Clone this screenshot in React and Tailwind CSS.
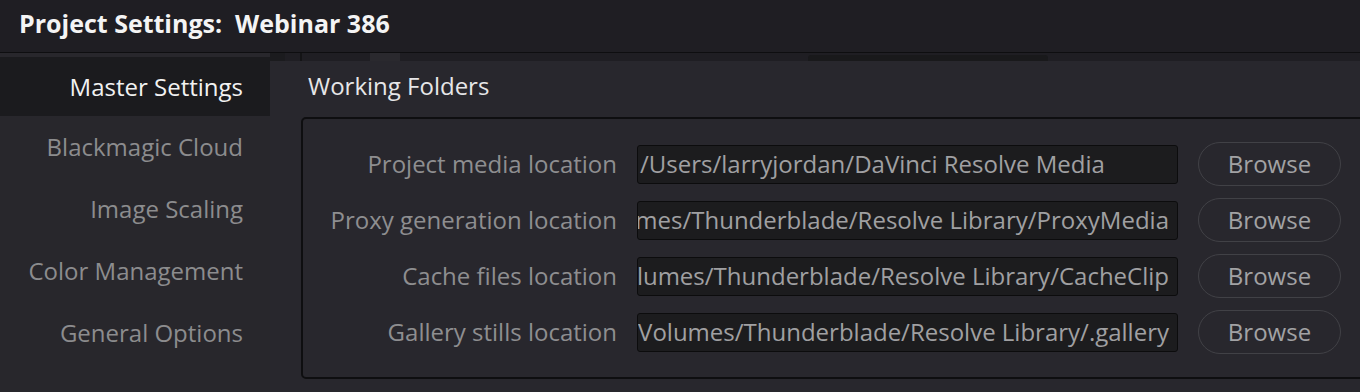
import React from 'react';

const sections = [
  { label: 'Master Settings', active: true },
  { label: 'Blackmagic Cloud' },
  { label: 'Image Scaling' },
  { label: 'Color Management' },
  { label: 'General Options' },
];

const folders = [
  { label: 'Project media location', path: '/Users/larryjordan/DaVinci Resolve Media' },
  { label: 'Proxy generation location', path: '/Volumes/Thunderblade/Resolve Library/ProxyMedia' },
  { label: 'Cache files location', path: '/Volumes/Thunderblade/Resolve Library/CacheClip' },
  { label: 'Gallery stills location', path: '/Volumes/Thunderblade/Resolve Library/.gallery' },
];

function FolderRow({ label, path }) {
  return (
    <div className="flex items-center h-[56px]">
      <div className="w-[314px] text-right text-[24px] text-[#8e8e90] whitespace-nowrap">{label}</div>
      {/* path field: long paths show their tail, like the app does */}
      <div className="ml-[20px] w-[541px] h-[39px] flex justify-end items-center overflow-hidden bg-[#1c1c1e] border border-[#0c0c0d] rounded-[3px] pr-[8px]">
        <span className="shrink-0 min-w-full whitespace-nowrap text-[24px] text-[#a0a0a2] pl-[2px]">{path}</span>
      </div>
      <button className="ml-[20px] w-[143px] h-[44px] rounded-full border-[1.5px] border-[#414146] text-[24px] text-[#a2a2a4]">
        Browse
      </button>
    </div>
  );
}

export default function App() {
  return (
    <div className="w-[1360px] h-[392px] overflow-hidden flex flex-col bg-[#28272d] font-['Open_Sans',sans-serif]">
      <header className="h-[53px] shrink-0 flex items-center pl-[19px] pb-[4px] bg-[#1f1e23] border-b border-[#0e0e10]">
        <h1 className="text-[25px] font-bold text-[#f4f4f4] whitespace-pre">Project Settings:  Webinar 386</h1>
      </header>

      <div className="flex flex-1 min-h-0">
        {/* Sidebar */}
        <nav className="w-[270px] shrink-0 flex flex-col pt-[4px] bg-[#28272c]">
          {sections.map(({ label, active }) => (
            <div
              key={label}
              className={`flex items-center justify-end pr-[27px] text-[24px] whitespace-nowrap ${
                active ? 'h-[59px] bg-[#1b1b1e] text-[#f2f2f2]' : 'h-[62px] text-[#8c8c8e]'
              }`}
            >
              {label}
            </div>
          ))}
        </nav>

        <div className="flex-1 flex flex-col min-w-0">
          {/* bits of the window behind, peeking out */}
          <div className="h-[8px] shrink-0 flex bg-[#1f1e23]">
            <div className="w-[15px] bg-[#1b1b1e]" />
            <div className="ml-[15px] w-[2px] bg-[#141416]" />
            <div className="ml-[68px] w-[30px] bg-[#2a292e]" />
            <div className="ml-[408px] w-[240px] bg-[#19191b] rounded-t-[3px] mt-[2px]" />
          </div>

          <main className="flex-1 bg-[#28272d] pl-[31px]">
            <div className="h-[50px] flex items-center pl-[7px] text-[24px] text-[#e6e6e8]">Working Folders</div>
            <div className="mt-[6px] w-[1080px] border-2 border-[#0e0e10] rounded-[5px] py-[17px]">
              {folders.map((f) => (
                <FolderRow key={f.label} {...f} />
              ))}
            </div>
          </main>
        </div>
      </div>
    </div>
  );
}
